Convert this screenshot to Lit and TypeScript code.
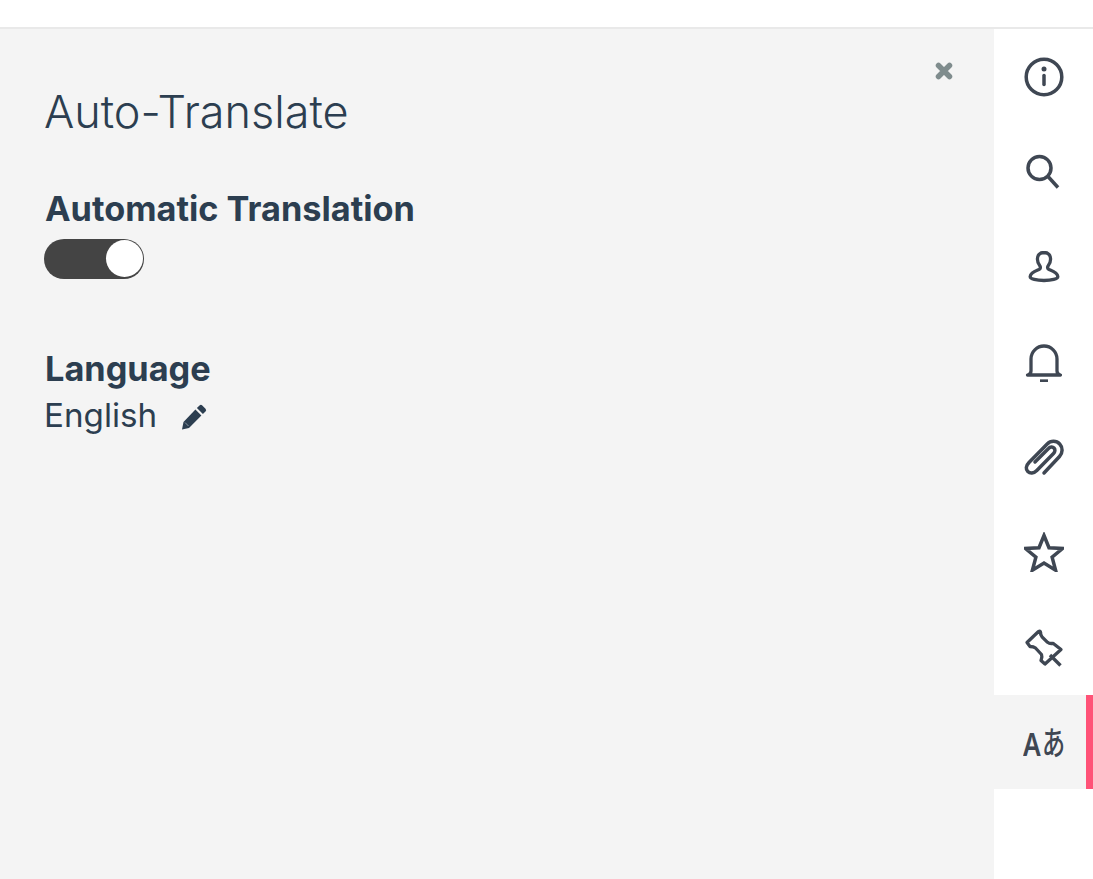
import { LitElement, html, css } from "lit";
import { customElement } from "lit/decorators.js";

const S = "#3f4753";
const icons = [
  html`<svg class="ic" viewBox="0 0 40 40" width="40" height="40" fill="none" stroke="${S}" stroke-width="3.500" stroke-linecap="round"><circle cx="20" cy="20" r="17.800"/><path d="M20 18.500v9"/><circle cx="20" cy="12" r="2.500" fill="${S}" stroke="none"/></svg>`,
  html`<svg class="ic" viewBox="0 0 40 40" width="40" height="40" fill="none" stroke="${S}" stroke-width="3.500" stroke-linecap="round"><circle cx="15.500" cy="16" r="11.500"/><path d="M24 24.500L34 35.500" stroke-linecap="butt"/></svg>`,
  html`<svg class="ic" viewBox="0 0 40 40" width="40" height="40" fill="none" stroke="${S}" stroke-width="3.300" stroke-linejoin="round"><path d="M20 5.500c-4.400 0-6.600 3-6.600 6.500 0 3 1.200 5.200 2.400 6.800 1 1.300 .8 3-.9 3.800-3.200 1.400-8.200 3-8.700 6.900-.2 2.500 6.500 4 13.800 4s14-1.500 13.800-4c-.5-3.900-5.500-5.500-8.700-6.900-1.700-.8-1.900-2.500-.9-3.800 1.200-1.600 2.400-3.800 2.400-6.800 0-3.500-2.200-6.500-6.600-6.500z"/></svg>`,
  html`<svg class="ic" viewBox="0 0 40 40" width="40" height="40" fill="none" stroke="${S}" stroke-width="3.300" stroke-linecap="round" stroke-linejoin="round"><path d="M3.500 33c2.200-.5 3.500-2 3.500-4V17A13 13 0 0 1 33 17v12c0 2 1.300 3.500 3.500 4z"/><path d="M16 39h8" stroke-linecap="butt"/></svg>`,
  html`<svg class="ic" viewBox="0 0 40 40" width="40" height="40" fill="none" stroke="${S}" stroke-width="3.500" stroke-linecap="round" stroke-linejoin="round"><path d="M20 36L35.500 19.500c3.300-3.400 3.500-9 .2-12.500s-9-3.600-12.500 0L5 25.500c-3.300 3.300-3.400 6.700-1.200 8.900s5.800 2.200 9-1L29.500 16.500c1.700-1.700 1.900-4 .5-5.500s-3.800-1.300-5.500 .5L11 25"/></svg>`,
  html`<svg class="ic" viewBox="0 0 40 40" width="40" height="40" fill="none" stroke="${S}" stroke-width="3.500" stroke-linejoin="miter"><path d="M20 3.500l5 12.200 13.500 .8-10.400 8.600 3.500 13.100L20 31l-11.600 7.200 3.500-13.100L1.500 16.500l13.500-.8z"/></svg>`,
  html`<svg class="ic" viewBox="0 0 40 40" width="40" height="40" fill="none" stroke="${S}" stroke-width="3.300" stroke-linecap="round" stroke-linejoin="round"><path d="M3 15.500L14.500 4.500c1.200-.8 2-.3 2.100 .8-.3 1.700 .2 3 1.400 4.500l5.500 5.500c1.600 1.200 4 1.300 5.500 1L37 22.500 21 37 17 33.500c.5-1.700 1.500-3.300 .5-6l-6-6.500c-1.500-1.200-3.500-1.500-5.500-1.500z"/><path d="M26 28l10.500 10.500" stroke-linecap="butt"/></svg>`,
];

@customElement("app-root")
export class AppRoot extends LitElement {
  static styles = css`
    :host { display: block; height: 879px; background: #fff; overflow: hidden; font-family: Inter, "Noto Sans", sans-serif; color: #2c3e50; }
    .top { height: 27px; border-bottom: 2px solid #e9e9e9; }
    .main { display: flex; height: 850px; }
    .panel { position: relative; flex: 1; background: #f4f4f4; padding: 54px 45px 0; box-sizing: border-box; }
    h1 { margin: 0 0 0 -1px; font-size: 45px; font-weight: 300; line-height: 58px; }
    .close { position: absolute; right: 41px; top: 33px; display: block; }
    h2 { margin: 0; font-size: 34.300px; font-weight: 700; line-height: 46px; }
    .lang { margin-top: 67px; }
    .auto { margin-top: 45px; }
    .switch { position: relative; width: 100px; height: 40px; margin-top: 7px; margin-left: -1px; border-radius: 20px; background: #444; }
    .knob { position: absolute; right: 1px; top: 1px; width: 37px; height: 37px; border-radius: 50%; background: #fff; }
    .val { display: flex; align-items: center; gap: 24px; margin-left: -1px; font-size: 33.200px; line-height: 46px; font-weight: 400; }
    .pencil { display: block; margin-top: 3px; }
    .rail { width: 99px; flex: none; display: flex; flex-direction: column; }
    .item { height: 95px; flex: none; display: flex; align-items: center; justify-content: center; box-sizing: border-box; }
    .item.active { height: 94px; margin-top: 1px; background: #f4f4f4; border-right: 7px solid #ff5277; padding-left: 7px; }
    .ic { display: block; }
    .tr { display: flex; align-items: baseline; width: 41px; color: #3f4753; white-space: nowrap; font-family: "Noto Sans", sans-serif; }
    .tr b { display: inline-block; width: 19px; font-size: 33px; font-weight: 600; transform: scaleX(0.8); transform-origin: left center; }
    .tr i { display: inline-block; width: 22px; font-style: normal; font-family: "Noto Sans CJK JP", sans-serif; font-size: 33px; font-weight: 500; transform: translateY(-1px) scaleX(0.7); transform-origin: left center; }
  `;

  render() {
    return html`
      <div class="top"></div>
      <div class="main">
        <div class="panel">
          <svg class="close" viewBox="0 0 18 18" width="18" height="18" fill="none" stroke="#7f8c8d" stroke-width="5.500" stroke-linecap="round"><path d="M3.500 3.500l11 11M14.500 3.500l-11 11"/></svg>
          <h1>Auto-Translate</h1>
          <div class="auto">
            <h2>Automatic Translation</h2>
            <div class="switch"><div class="knob"></div></div>
          </div>
          <div class="lang">
            <h2>Language</h2>
            <div class="val">English
              <svg class="pencil" viewBox="0 0 26 26" width="26" height="26" fill="#2c3e50"><path d="M18.500 1.500a2 2 0 0 1 2.800 0l3.200 3.200a2 2 0 0 1 0 2.800l-2.600 2.600-6-6zM14.400 5.600l6 6L8 24 1 25.500 2.500 18z"/><path d="M4 18.500l3.500 3.500" stroke="#8a97a3" stroke-width="1" fill="none"/></svg>
            </div>
          </div>
        </div>
        <div class="rail">
          ${icons.map((i) => html`<div class="item">${i}</div>`)}
          <div class="item active"><span class="tr"><b>A</b><i>あ</i></span></div>
        </div>
      </div>
    `;
  }
}
